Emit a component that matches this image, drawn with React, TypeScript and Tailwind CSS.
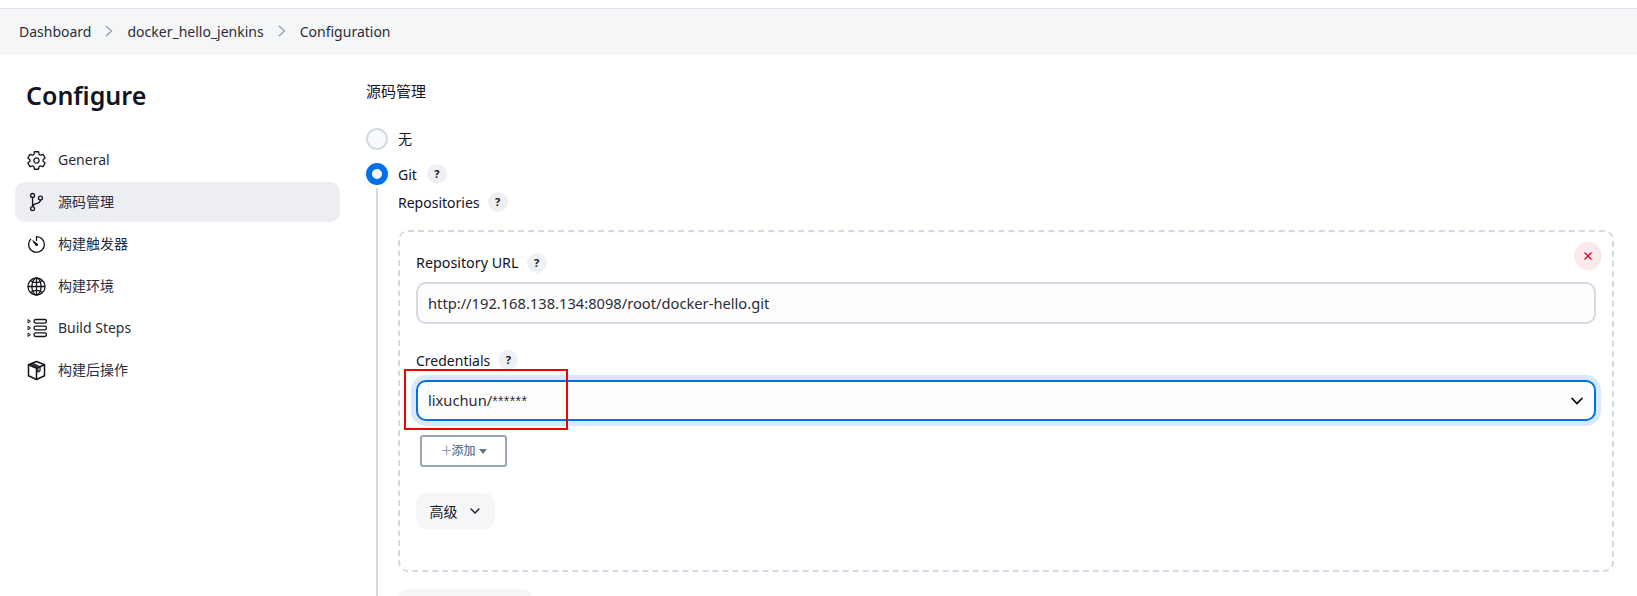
import React from 'react';
import { IoSettingsOutline, IoGitBranchOutline, IoTimerOutline, IoGlobeOutline, IoClose } from 'react-icons/io5';

const font = 'font-["Noto_Sans","Noto_Sans_CJK_SC",sans-serif]';

const BuildStepsIcon = () => (
    <svg width="20" height="20" viewBox="0 0 20 20" fill="none" stroke="#14141f" strokeWidth="1.3">
        <rect x="7" y="1.5" width="12.5" height="3.6" rx="1.8" />
        <rect x="7" y="8.2" width="12.5" height="3.6" rx="1.8" />
        <rect x="7" y="14.9" width="12.5" height="3.6" rx="1.8" />
        <path d="M1 1.6l2.6 1.7L1 5zM1 8.3l2.6 1.7L1 11.7zM1 15l2.6 1.7L1 18.4z" strokeLinejoin="round" strokeWidth="1" />
    </svg>
);

const PackageIcon = () => (
    <svg width="21" height="21" viewBox="0 0 21 21" fill="none" stroke="#14141f" strokeWidth="1.5" strokeLinejoin="round">
        <path d="M10.5 1.5l8 3.2v11l-8 3.8-8-3.8v-11z" />
        <path d="M2.5 4.7l8 3.6 8-3.6M10.5 8.3v11.2" />
        <path d="M6 3.1l8 3.6v4.2l-2.2 1V7.4L3.9 3.9" strokeWidth="1.2" />
    </svg>
);

const navItems = [
    { label: 'General', icon: <IoSettingsOutline size={23} /> },
    { label: '源码管理', icon: <IoGitBranchOutline size={24} />, active: true },
    { label: '构建触发器', icon: <IoTimerOutline size={23} /> },
    { label: '构建环境', icon: <IoGlobeOutline size={23} /> },
    { label: 'Build Steps', icon: <BuildStepsIcon /> },
    { label: '构建后操作', icon: <PackageIcon /> },
];

const Help = () => (
    <span className="w-5 h-5 rounded-full bg-[#eff0f4] text-[#14141f] text-[11px] font-bold flex items-center justify-center">?</span>
);

const Chevron = () => (
    <svg width="18" height="18" viewBox="0 0 512 512" fill="none" stroke="#14141f" strokeWidth="48" strokeLinecap="round" strokeLinejoin="round"><path d="M112 184l144 144 144-144" /></svg>
);

const Separator = () => (
    <svg className="mx-[13px]" width="10" height="12" viewBox="0 0 10 12" fill="none" stroke="#8d9bb0" strokeWidth="1.2"><path d="M2 1l5.5 5L2 11" /></svg>
);

export default function App() {
    return (
        <div className={`${font} relative w-[1637px] h-[596px] overflow-hidden bg-white text-[#14141f] text-[14px]`}>
            <div className="h-[9px] border-b border-[#e2e3e6]"></div>
            <div className="h-[46px] bg-[#f5f6f8] flex items-center pl-[19px] pb-[2px] text-[#2c2c38]">
                <span>Dashboard</span>
                <Separator />
                <span>docker_hello_jenkins</span>
                <Separator />
                <span>Configuration</span>
            </div>
            <div className="flex">
                <aside className="w-[366px] shrink-0 pl-[15px] pr-[26px]">
                    <h1 className="text-[25px] leading-[34px] font-semibold pl-[11px] mt-[23px] mb-[28px]">Configure</h1>
                    <nav className="flex flex-col gap-[2px]">
                        {navItems.map(item => (
                            <div key={item.label} className={`h-[40px] rounded-[10px] flex items-center gap-[11px] pl-[11px] text-[14px] text-[#2c2c38] ${item.active ? 'bg-[#eceef3]' : ''}`}>
                                <span className="w-[21px] flex justify-center text-[#14141f]">{item.icon}</span>
                                <span className="pb-[2px]">{item.label}</span>
                            </div>
                        ))}
                    </nav>
                </aside>
                <main className="flex-1 pr-[23px]">
                    <h2 className="text-[15px] leading-[22px] mt-[25px] mb-[26px]">源码管理</h2>
                    <div className="flex items-center gap-[10px] h-[22px]">
                        <span className="w-[22px] h-[22px] rounded-full border-2 border-[#d3d9e5] bg-[#fafafc]"></span>
                        <span className="pb-[2px]">无</span>
                    </div>
                    <div className="flex items-center gap-[10px] h-[22px] mt-[13px]">
                        <span className="w-[22px] h-[22px] rounded-full border-[6px] border-[#0070e8] bg-white"></span>
                        <span>Git</span>
                        <Help />
                    </div>
                    <div className="ml-[10px] border-l-2 border-[#d3d9e5] pl-[20px] pt-[4px] pb-[40px] mt-[3px]">
                        <div className="flex items-center gap-[8px] h-[20px] ">
                            <span>Repositories</span>
                            <Help />
                        </div>
                        <div className="relative mt-[18px] h-[342px] border-2 border-dashed border-[#d3d9e5] rounded-[10px] pl-[16px] pr-[16px] pt-[21px]">
                            <button className="absolute top-[10px] right-[10px] w-7 h-7 rounded-full bg-[#fbe8ea] flex items-center justify-center text-[#e6002e]"><IoClose size={14} /></button>
                            <div className="flex items-center gap-[8px] h-[20px] text-[14.3px]">
                                <span>Repository URL</span>
                                <Help />
                            </div>
                            <div className="mt-[9px] h-[42px] rounded-[10px] border-2 border-[#d3d9e5] bg-[#fdfdfd] flex items-center px-[10px] text-[14.7px] text-[#2c2c38]">http://192.168.138.134:8098/root/docker-hello.git</div>
                            <div className="flex items-center gap-[8px] h-[20px] mt-[26px]">
                                <span>Credentials</span>
                                <Help />
                            </div>
                            <div className="mt-[10px] h-[41px] rounded-[10px] border-2 border-[#0070e8] bg-[#fdfdfd] shadow-[0_0_0_5px_#d9e9fb] flex items-center justify-between px-[10px] pr-[8px] text-[14.7px] text-[#2c2c38]">
                                <span>lixuchun/<span className="font-['Liberation_Sans'] text-[14px] tracking-[0.4px]">******</span></span>
                                <Chevron />
                            </div>
                            <button className="mt-[14px] ml-[4px] w-[87px] h-[32px] rounded-[3px] border-2 border-[#9aa6b4] bg-white flex items-center justify-center gap-[3px] text-[12px] font-medium text-[#5d7596]">
                                <span className="text-[#8d9bb0]">＋</span>
                                <span className="-ml-[4px]">添加</span>
                                <svg width="8" height="5" viewBox="0 0 8 5" fill="#5d7596"><path d="M0 0h8L4 5z" /></svg>
                            </button>
                            <button className="mt-[26px] w-[79px] h-[36px] rounded-[10px] bg-[#f5f6f8] flex items-center justify-center gap-[10px] text-[14px]">
                                <span>高级</span>
                                <svg width="14" height="14" viewBox="0 0 512 512" fill="none" stroke="#14141f" strokeWidth="48" strokeLinecap="round" strokeLinejoin="round"><path d="M112 184l144 144 144-144" /></svg>
                            </button>
                        </div>
                        <div className="mt-[17px] w-[134px] h-[36px] rounded-[10px] bg-[#f5f6f8]"></div>
                    </div>
                </main>
            </div>
            <div className="absolute left-[404px] top-[369px] w-[164px] h-[61px] border-2 border-[#f00000] pointer-events-none"></div>
        </div>
    );
}
